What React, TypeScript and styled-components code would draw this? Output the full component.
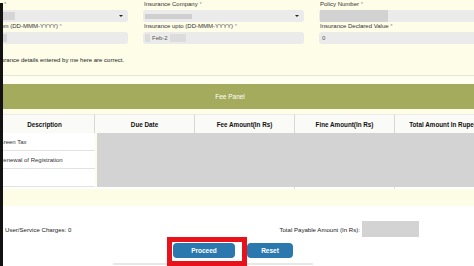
import React from "react";
import styled, { createGlobalStyle } from "styled-components";

const GlobalStyle = createGlobalStyle`
  html, body { margin: 0; padding: 0; background: #ffffff; }
  body { font-family: "Liberation Sans", Arial, sans-serif; color: #222; }
  * { box-sizing: border-box; }
`;

const CREAM = "#fdfde8";

const Page = styled.div`
  display: flex;
  width: 474px;
  height: 266px;
  overflow: hidden;
  background: ${CREAM};
`;

const LeftBar = styled.div`
  flex: none;
  width: 3px;
  margin-top: 3px;
  background: #121212;
`;

const Viewport = styled.div`
  flex: 1;
  min-width: 0;
  overflow: hidden;
  display: flex;
  flex-direction: column;
`;

const Content = styled.div`
  flex: none;
  width: 500px;
  margin-left: -8px;
  display: flex;
  flex-direction: column;
`;

const FormSection = styled.section`
  background: ${CREAM};
  border-bottom: 1px solid #e6e6d4;
  padding-bottom: 10px;
`;

const FormGrid = styled.div`
  margin-left: -44px;
  display: grid;
  grid-template-columns: 177px 161px 1fr;
  column-gap: 15px;
  row-gap: 0;
`;

const Field = styled.div`
  display: flex;
  flex-direction: column;
  gap: 1px;
`;

const Label = styled.label<{ $shift?: number }>`
  font-size: 6px;
  line-height: 9px;
  color: #333;
  white-space: nowrap;
  padding-left: 1px;
  margin-left: ${(p) => p.$shift ?? 0}px;
`;

const Star = styled.span`
  color: #999;
`;

const InputBox = styled.div<{ $pad?: number }>`
  height: 12px;
  background: #ebebeb;
  border-radius: 3px;
  display: flex;
  align-items: center;
  padding-left: ${(p) => p.$pad ?? 4}px;
  padding-right: 5px;
  font-size: 6px;
  color: #555;
  gap: 2px;
`;

const Redact = styled.span<{ $w: number; $h?: number; $shade?: string }>`
  display: block;
  flex: none;
  width: ${(p) => p.$w}px;
  height: ${(p) => p.$h ?? 8}px;
  background: ${(p) => p.$shade ?? "#d5d5d5"};
`;

const Caret = styled.span`
  margin-left: auto;
  width: 0;
  height: 0;
  border-left: 2px solid transparent;
  border-right: 2px solid transparent;
  border-top: 2.5px solid #222;
`;

const Declaration = styled.p`
  margin: 12px 0 0 -2px;
  font-size: 6px;
  line-height: 9px;
  color: #222;
  white-space: nowrap;
`;

const Spacer = styled.div`
  height: 8px;
  background: #fefef1;
`;

const PanelBand = styled.div`
  height: 25px;
  background: #a5ab5c;
  color: #fff;
  font-size: 6.5px;
  display: flex;
  align-items: center;
  justify-content: center;
  padding-right: 30px;
`;

const Strip = styled.div`
  height: 5px;
  background: ${CREAM};
`;

const FeeTable = styled.div`
  display: grid;
  grid-template-columns: repeat(5, 100px);
  grid-template-rows: 19px repeat(3, 18px) 2px 17px;
`;

const HeadCell = styled.div<{ $last?: boolean }>`
  background: #fafaf6;
  border-right: ${(p) => (p.$last ? "none" : "1px solid #d9d9d4")};
  border-top: 1px solid #ececec;
  display: flex;
  align-items: center;
  justify-content: center;
  font-size: 6.3px;
  font-weight: 700;
  color: #111;
  white-space: nowrap;
`;

const DescCell = styled.div`
  grid-column: 1;
  background: #ffffff;
  border-bottom: 1px solid #e2e2e0;
  display: flex;
  align-items: center;
  padding-left: 4px;
  font-size: 6px;
  color: #333;
  white-space: nowrap;
`;

const GrayBlock = styled.div`
  grid-column: 2 / 6;
  grid-row: 2 / 5;
  margin-left: 2px;
  background: #d3d3d3;
`;

const GapCell = styled.div<{ $line?: boolean }>`
  grid-row: 5;
  background: #ffffff;
  border-right: ${(p) => (p.$line ? "1px solid #dcdcdc" : "none")};
`;

const FooterRow = styled.div`
  grid-column: 1 / 6;
  grid-row: 6;
  background: #fdfde6;
`;

const Bottom = styled.section`
  flex: 1;
  background: #ffffff;
  display: flex;
  flex-direction: column;
`;

const SummaryRow = styled.div`
  display: flex;
  align-items: center;
  padding: 15px 55px 0 2px;
  font-size: 6.1px;
  color: #222;
  white-space: nowrap;
`;

const TotalGroup = styled.div`
  margin-left: auto;
  display: flex;
  align-items: center;
  gap: 2px;
`;

const AmountBox = styled.div`
  width: 57px;
  height: 16px;
  background: #d3d3d3;
`;

const ButtonRow = styled.div`
  position: relative;
  z-index: 1;
  display: flex;
  align-items: flex-start;
  padding-left: 164px;
`;

const Highlight = styled.div`
  border: 5px solid #e8121b;
  padding: 1px 7px 3px 1px;
  background: #ffffff;
`;

const Button = styled.button`
  border: none;
  border-radius: 4px;
  background: #2a78ae;
  color: #fff;
  font-family: "Liberation Sans", Arial, sans-serif;
  font-weight: 700;
  font-size: 6.5px;
  height: 15px;
  padding: 0;
  display: flex;
  align-items: center;
  justify-content: center;
`;

const ProceedButton = styled(Button)`
  width: 62px;
`;

const ResetButton = styled(Button)`
  width: 46px;
  margin-top: 6px;
`;

const Rule = styled.div`
  margin: -3px 0 0 110px;
  width: 200px;
  height: 2px;
  background: #e8e8e8;
`;

const headers = [
  "Description",
  "Due Date",
  "Fee Amount(In Rs)",
  "Fine Amount(In Rs)",
  "Total Amount In Rupees",
];

export default function App() {
  return (
    <>
      <GlobalStyle />
      <Page>
        <LeftBar />
        <Viewport>
          <Content>
            <FormSection>
              <FormGrid>
                <Field>
                  <Label $shift={-12}>
                    Vehicle Registration No <Star>*</Star>
                  </Label>
                  <InputBox>
                    <Redact $w={60} />
                    <Caret />
                  </InputBox>
                </Field>
                <Field>
                  <Label>
                    Insurance Company <Star>*</Star>
                  </Label>
                  <InputBox $pad={2}>
                    <Redact $w={47} $h={5} $shade="#cfcfcf" />
                    <Caret />
                  </InputBox>
                </Field>
                <Field>
                  <Label>
                    Policy Number <Star>*</Star>
                  </Label>
                  <InputBox $pad={1}>
                    <Redact $w={68} $h={12} $shade="#d2d2d2" />
                  </InputBox>
                </Field>
                <Field>
                  <Label>
                    Insurance Valid From (DD-MMM-YYYY) <Star>*</Star>
                  </Label>
                  <InputBox>
                    <Redact $w={52} />
                  </InputBox>
                </Field>
                <Field>
                  <Label>
                    Insurance upto (DD-MMM-YYYY) <Star>*</Star>
                  </Label>
                  <InputBox $pad={2}>
                    <Redact $w={5} $shade="#dcdcdc" />
                    <span>Feb-2</span>
                    <Redact $w={16} $shade="#dcdcdc" />
                  </InputBox>
                </Field>
                <Field>
                  <Label>
                    Insurance Declared Value <Star>*</Star>
                  </Label>
                  <InputBox $pad={3}>0</InputBox>
                </Field>
              </FormGrid>
              <Declaration>
                Insurance details entered by me here are correct.
              </Declaration>
            </FormSection>
            <Spacer />
            <PanelBand>Fee Panel</PanelBand>
            <Strip />
            <FeeTable>
              {headers.map((h, i) => (
                <HeadCell key={h} $last={i === headers.length - 1}>
                  {h}
                </HeadCell>
              ))}
              <DescCell>Green Tax</DescCell>
              <DescCell>Renewal of Registration</DescCell>
              <DescCell />
              <GrayBlock />
              {[0, 1, 2, 3, 4].map((i) => (
                <GapCell key={i} $line={i === 2 || i === 3} />
              ))}
              <FooterRow />
            </FeeTable>
          </Content>
          <Bottom>
            <SummaryRow>
              <span>User/Service Charges: 0</span>
              <TotalGroup>
                <span>Total Payable Amount (In Rs):</span>
                <AmountBox />
              </TotalGroup>
            </SummaryRow>
            <ButtonRow>
              <Highlight>
                <ProceedButton>Proceed</ProceedButton>
              </Highlight>
              <ResetButton>Reset</ResetButton>
            </ButtonRow>
            <Rule />
          </Bottom>
        </Viewport>
      </Page>
    </>
  );
}
